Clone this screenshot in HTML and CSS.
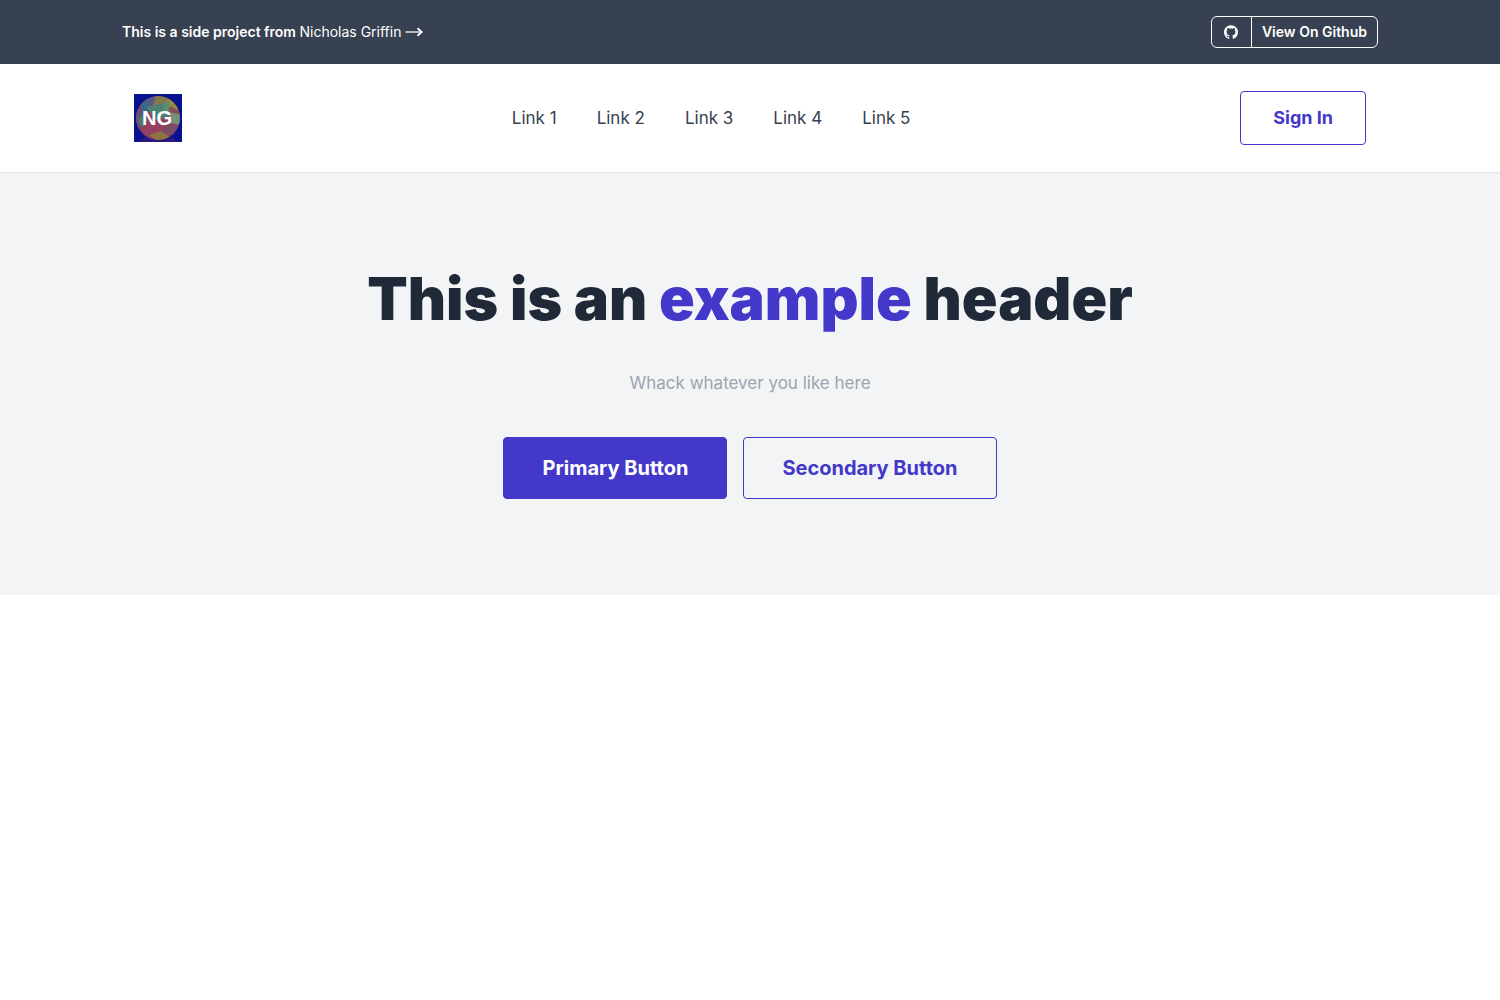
FILE: index.html
```
<!DOCTYPE html>
<html lang="en">
<head>
<meta charset="utf-8">
<meta name="viewport" content="width=device-width, initial-scale=1">
<title>Example header</title>
<link rel="stylesheet" href="styles.css">
</head>
<body>
<div class="banner">
  <div class="banner-inner">
    <p class="banner-text">This is a side project from <a class="banner-link" href="#">Nicholas Griffin
      <svg class="arrow" viewBox="0 0 18 10" aria-hidden="true"><path d="M0.500 5H16" stroke="#d9dbde" stroke-width="1.600"/><path d="M12.500 1.300L16.700 5L12.500 8.700" stroke="#fff" stroke-width="1.800"/></svg></a></p>
    <a class="github" href="#">
      <span class="github-icon"><svg viewBox="0 0 24 24" aria-hidden="true"><path fill="currentColor" d="M12 .297c-6.630 0-12 5.373-12 12 0 5.303 3.438 9.800 8.205 11.385.6.113.820-.258.820-.577 0-.285-.010-1.040-.015-2.040-3.338.724-4.042-1.610-4.042-1.610C4.422 18.070 3.633 17.700 3.633 17.700c-1.087-.744.084-.729.084-.729 1.205.084 1.838 1.236 1.838 1.236 1.070 1.835 2.809 1.305 3.495.998.108-.776.417-1.305.760-1.605-2.665-.300-5.466-1.332-5.466-5.930 0-1.310.465-2.380 1.235-3.220-.135-.303-.540-1.523.105-3.176 0 0 1.005-.322 3.300 1.230.960-.267 1.980-.399 3-.405 1.020.006 2.040.138 3 .405 2.280-1.552 3.285-1.230 3.285-1.230.645 1.653.240 2.873.120 3.176.765.840 1.230 1.910 1.230 3.220 0 4.610-2.805 5.625-5.475 5.920.420.360.810 1.096.810 2.220 0 1.606-.015 2.896-.015 3.286 0 .315.210.690.825.570C20.565 22.092 24 17.592 24 12.297c0-6.627-5.373-12-12-12"/></svg></span>
      <span class="github-label">View On Github</span>
    </a>
  </div>
</div>
<header class="header">
  <div class="header-inner">
    <a class="logo" href="#" aria-label="NG home">
      <svg viewBox="0 0 48 48" aria-hidden="true">
        <defs><clipPath id="disc"><circle cx="24" cy="24" r="22"/></clipPath></defs>
        <rect width="48" height="48" fill="#08128c"/>
        <path d="M4 48L12 42H36L44 48Z" fill="#28187f"/>
        <g clip-path="url(#disc)">
          <path fill="#8b4163" d="M0 0H48V48H0Z"/>
          <path fill="#694d72" d="M0 20L8 12L14 22L7 34L0 30Z"/>
          <path fill="#356c88" d="M7 10L14 5L21 14L9 22Z"/>
          <path fill="#535b8d" d="M12 5L25 1L20 13L14 12Z"/>
          <path fill="#827747" d="M22 0L38 3L31 11L19 12Z"/>
          <path fill="#988a42" d="M34 3L48 15L40 16L32 10Z"/>
          <path fill="#4d8175" d="M12 13L31 9L38 20L23 27Z"/>
          <path fill="#5d8e70" d="M29 10L35 6L36 22L30 20Z"/>
          <path fill="#84505b" d="M37 12L47 19L42 22L34 18Z"/>
          <path fill="#76907a" d="M34 18L48 21L46 31L36 29Z"/>
          <path fill="#557569" d="M4 23L12 20L14 32L6 33Z"/>
          <path fill="#98405f" d="M12 28L33 31L23 43L7 36Z"/>
          <path fill="#7a4c67" d="M32 31L45 31L39 42L28 38Z"/>
          <path fill="#8d753f" d="M15 41L27 37L36 43L25 48Z"/>
        </g>
        <text class="logo-text" x="23" y="31" text-anchor="middle">NG</text>
      </svg>
    </a>
    <nav class="nav" aria-label="Main">
      <a href="#">Link 1</a>
      <a href="#">Link 2</a>
      <a href="#">Link 3</a>
      <a href="#">Link 4</a>
      <a href="#">Link 5</a>
    </nav>
    <button class="button button-small" type="button">Sign In</button>
  </div>
</header>
<main class="hero">
  <h1 class="hero-title">This is an <span class="accent">example</span> header</h1>
  <p class="hero-text">Whack whatever you like here</p>
  <div class="hero-actions">
    <button class="button button-primary" type="button">Primary Button</button>
    <button class="button" type="button">Secondary Button</button>
  </div>
</main>
</body>
</html>
```
FILE: styles.css
```
* {
  box-sizing: border-box;
}

body {
  margin: 0;
  background: #fff;
  color: #374151;
  font-family: Inter, "Liberation Sans", sans-serif;
}

a {
  color: inherit;
  text-decoration: none;
}

.banner {
  background: #374151;
  color: #fff;
  font-size: 14px;
  line-height: 20px;
}

.banner-inner,
.header-inner {
  display: flex;
  align-items: center;
  justify-content: space-between;
  max-width: 1280px;
  margin: 0 auto;
}

.banner-inner {
  padding: 16px 12px;
}

.banner-text {
  margin: 0;
  font-weight: 600;
}

.banner-link {
  font-weight: 400;
}

.arrow {
  width: 18px;
  height: 10px;
  fill: none;
}

.github {
  display: flex;
  height: 32px;
  border: 1px solid #fff;
  border-radius: 6px;
  font-weight: 600;
}

.github-icon {
  display: flex;
  align-items: center;
  justify-content: center;
  width: 40px;
  border-right: 1px solid #fff;
}

.github-icon svg {
  width: 14px;
  height: 14px;
}

.github-label {
  padding: 5px 10px;
}

.header {
  border-bottom: 1px solid #e5e7eb;
}

.header-inner {
  padding: 27px 24px;
}

.logo svg {
  display: block;
  width: 48px;
  height: 48px;
}

.logo-text {
  fill: #fff;
  font-family: "Liberation Sans", sans-serif;
  font-size: 20px;
  font-weight: 700;
}

.nav {
  display: flex;
  gap: 40px;
  font-size: 17px;
  line-height: 28px;
}

.button {
  padding: 16px 38px;
  border: 1px solid #4338ca;
  border-radius: 4px;
  background: transparent;
  color: #4338ca;
  font-family: inherit;
  font-size: 20px;
  font-weight: 700;
  line-height: 28px;
}

.button-small {
  padding: 12px 32px;
  font-size: 18px;
}

.button-primary {
  background: #4338ca;
  color: #fff;
}

.hero {
  padding: 96px 24px;
  background: #f3f4f6;
  text-align: center;
}

.hero-title {
  margin: 0;
  color: #1f2937;
  font-size: 59px;
  font-weight: 900;
  line-height: 60px;
}

.accent {
  color: #4338ca;
}

.hero-text {
  margin: 40px 0;
  color: #9ca3af;
  font-size: 17px;
  line-height: 28px;
}

.hero-actions {
  display: flex;
  flex-wrap: wrap;
  justify-content: center;
  gap: 16px;
}
```
